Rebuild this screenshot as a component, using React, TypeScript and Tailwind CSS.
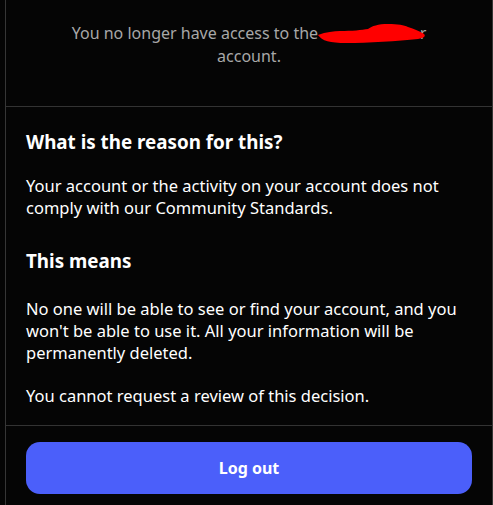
import React from "react";

export default function App() {
  return (
    <div className="w-[493px] h-[505px] bg-[#050505] overflow-hidden" style={{ fontFamily: '"Noto Sans", "Open Sans", sans-serif' }}>
      <div className="ml-[5px] w-[488px] h-full border-l border-r border-[#363636] flex flex-col">
        <div className="h-[107px] border-b border-[#333333] flex items-center justify-center px-8 pb-[16px]">
          <p className="text-center text-[16px] leading-[23px] text-[#a8a8a8]">
            You no longer have access to the{" "}
            <span className="relative inline-block w-[104px] text-right align-top">
              <span>r</span>
              <svg className="absolute left-[-4px] top-[2px]" width="108" height="20" viewBox="0 0 108 20">
                <path d="M0 11 C 8 8, 16 7, 22 7 C 34 7, 44 6, 50 5 C 54 2, 60 0, 70 0 C 80 0, 86 1, 90 3 C 96 5, 102 7, 106 10 C 108 12, 106 14, 100 15 C 80 17, 50 19, 28 19 C 12 19, 4 17, 0 11 Z" fill="#ff0000" />
              </svg>
            </span>
            <br />
            account.
          </p>
        </div>
        <div className="flex-1 px-5 pt-[23px] text-white">
          <h2 className="text-[18.8px] leading-[25px] font-bold">What is the reason for this?</h2>
          <p className="mt-[20px] text-[16.5px] leading-[22px]">
            Your account or the activity on your account does not comply with our Community Standards.
          </p>
          <h2 className="mt-[30px] text-[18.8px] leading-[25px] font-bold">This means</h2>
          <p className="mt-[24px] text-[16.5px] leading-[22px]">
            No one will be able to see or find your account, and you won't be able to use it. All your information will be permanently deleted.
          </p>
          <p className="mt-[21px] text-[16.5px] leading-[22px]">You cannot request a review of this decision.</p>
        </div>
        <div className="border-t border-[#333333] px-5 pt-[16px] pb-[11px]">
          <button className="w-full h-[52px] rounded-[14px] bg-[#4b5ffa] text-white text-[16px] font-bold">Log out</button>
        </div>
      </div>
    </div>
  );
}
